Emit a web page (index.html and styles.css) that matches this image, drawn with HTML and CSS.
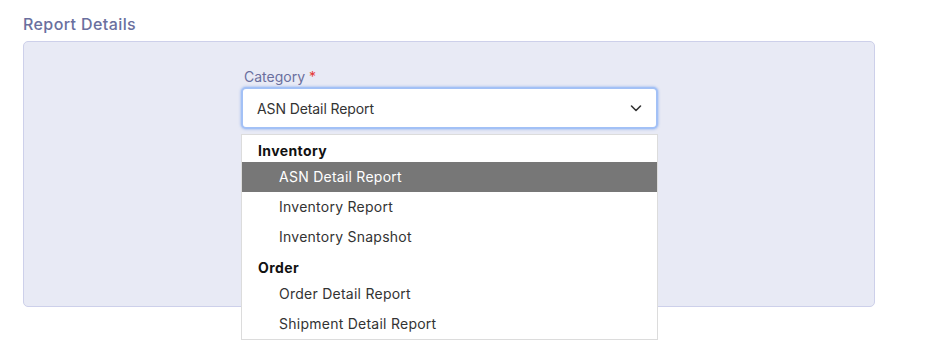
FILE: index.html
```html
<!DOCTYPE html>
<html>

<head>
    <meta charset="UTF-8">
    <link rel="stylesheet" href="styles.css">
</head>

<body>
    <div id="report">
        <h3 class="r_title">Report Details</h3>
        <div class="r_panel">
            <div class="r_field">
                <label class="r_label">Category <span class="r_req">*</span></label>
                <div class="r_select">
                    <span>ASN Detail Report</span>
                    <svg width="14" height="14" viewBox="0 0 14 14">
                        <path d="M2.5 5 L7 9.5 L11.5 5" fill="none" stroke="#333" stroke-width="1.6" stroke-linecap="round" stroke-linejoin="round" />
                    </svg>
                </div>
                <ul class="r_menu">
                    <li class="r_group">Inventory</li>
                    <li class="r_active">ASN Detail Report</li>
                    <li>Inventory Report</li>
                    <li>Inventory Snapshot</li>
                    <li class="r_group">Order</li>
                    <li>Order Detail Report</li>
                    <li>Shipment Detail Report</li>
                </ul>
            </div>
        </div>
    </div>
</body>

</html>
```

FILE: styles.css
```css
html,
body {
    height: 100%;
}

body {
    padding: 0;
    margin: 0;
    min-height: 343px;
    background-color: #ffffff;
    font-family: "Inter", "Noto Sans", sans-serif;
}

#report {
    padding: 15px 0 0 23px;
    width: 852px;
}

#report .r_title {
    margin: 0 0 8px 0;
    font-size: 16px;
    font-weight: 500;
    letter-spacing: 0.4px;
    color: #6a6f9e;
    line-height: 18px;
}

#report .r_panel {
    height: 264px;
    background-color: #e8eaf5;
    border: 1px solid #cdd0ea;
    border-radius: 5px;
    padding-left: 217px;
}

#report .r_field {
    position: relative;
    width: 417px;
    padding-top: 26px;
}

#report .r_label {
    display: block;
    margin-left: 3px;
    margin-bottom: 2px;
    font-size: 14px;
    color: #6a6f9e;
    line-height: 17px;
}

#report .r_req {
    color: #e53935;
}

#report .r_select {
    display: flex;
    align-items: center;
    justify-content: space-between;
    height: 38px;
    padding: 0 13px 0 14px;
    background-color: #ffffff;
    border: 2px solid #a3c1f6;
    border-radius: 5px;
    box-shadow: 0 0 2px 1px rgba(140, 175, 240, 0.5);
    font-size: 14px;
    letter-spacing: -0.1px;
    color: #333333;
}

#report .r_select svg {
    display: block;
}

/* dropdown list lies over the panel */
#report .r_menu {
    position: absolute;
    left: 0;
    right: 0;
    top: 92px;
    list-style: none;
    margin: 0;
    padding: 0;
    background-color: #ffffff;
    border: 1px solid #dcdcdc;
}

#report .r_menu li {
    height: 30px;
    line-height: 30px;
    padding-left: 37px;
    font-size: 14px;
    letter-spacing: 0.25px;
    color: #333333;
}

#report .r_menu .r_group {
    height: 23px;
    line-height: 23px;
    padding-top: 4px;
    padding-left: 16px;
    font-weight: 700;
    letter-spacing: 0.4px;
    color: #111111;
}

#report .r_menu .r_active {
    background-color: #777777;
    color: #ffffff;
}
```
